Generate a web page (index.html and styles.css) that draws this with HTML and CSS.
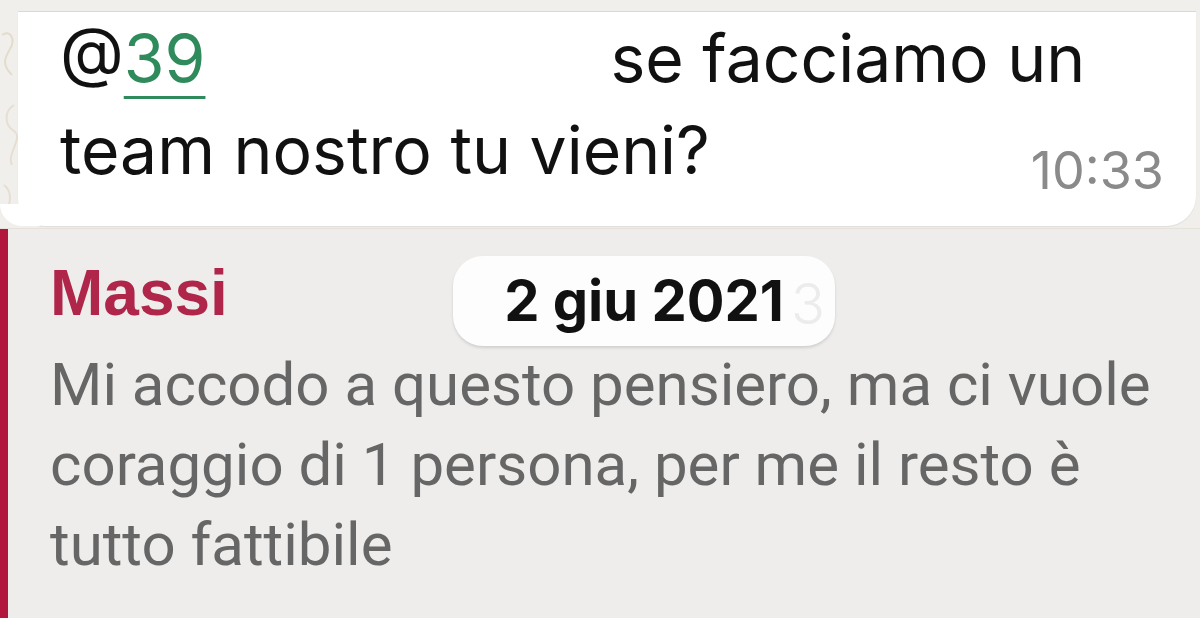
FILE: index.html
```html
<!DOCTYPE html>
<html lang="it">
  <head>
    <meta charset="UTF-8" />
    <meta name="viewport" content="width=device-width, initial-scale=1.0" />
    <title>Chat</title>
    <link rel="stylesheet" href="styles.css">
  </head>
  <body>
    <div class="chat">
      <svg class="doodles" width="18" height="210" viewBox="0 0 18 210">
        <path d="M2 20 C 10 14, 16 24, 10 34 S 2 50, 12 60" fill="none" stroke="#e3dccd" stroke-width="2"/>
        <path d="M14 90 C 4 96, 4 110, 14 116 S 6 140, 12 150" fill="none" stroke="#e6dfd1" stroke-width="2"/>
        <path d="M4 170 C 12 176, 12 190, 4 196" fill="none" stroke="#e6dfd1" stroke-width="2"/>
      </svg>
      <div class="bubble">
        <div class="line">
          <span>@<a class="mention">39</a></span>
          <span class="hidden-name"></span>
          <span>se facciamo un</span>
        </div>
        <div class="line last">
          <span>team nostro tu vieni?</span>
          <span class="time">10:33</span>
        </div>
      </div>
    </div>

    <div class="quote">
      <div class="author">Massi</div>
      <div class="quote-text">
        Mi accodo a questo pensiero, ma ci vuole
        coraggio di 1 persona, per me il resto è
        tutto fattibile
      </div>
      <div class="date-pill">2 giu 2021<span class="ghost">3</span></div>
    </div>
  </body>
</html>
```

FILE: styles.css
```css
body {
  margin: 0;
  padding: 0;
  width: 1200px;
  height: 618px;
  overflow: hidden;
  display: flex;
  flex-direction: column;
  background-color: #eeedeb;
}
.chat {
  display: flex;
  padding: 11px 4px 2px 0;
  background-color: #f0efec;
  border-bottom: 1px solid #e6e2da;
}
.doodles {
  flex: 0 0 18px;
  margin-top: 4px;
}
.bubble {
  position: relative;
  flex: 1;
  background-color: #fff;
  border-top: 1px solid #d9d9d9;
  border-radius: 0 0 30px 26px;
  padding: 0 0 30px 42px;
  font-family: "Inter", "Liberation Sans", sans-serif;
  font-size: 66px;
  line-height: 92px;
  color: #111;
  box-shadow: 0 1px 1px rgba(0, 0, 0, 0.08);
}
.bubble::before {
  content: "";
  position: absolute;
  left: -18px;
  bottom: 0;
  width: 40px;
  height: 22px;
  background-color: #fff;
  border-radius: 0 0 0 22px;
}
.line {
  display: flex;
  white-space: nowrap;
}
.line.last {
  align-items: flex-end;
  justify-content: space-between;
  padding-right: 32px;
}
.mention {
  color: #2f8a5c;
  text-decoration: underline;
  text-decoration-thickness: 3px;
  text-underline-offset: 14px;
}
.hidden-name {
  width: 405px;
}
.time {
  font-size: 52px;
  line-height: 50px;
  color: #8a8a8a;
}
.quote {
  position: relative;
  flex: 1;
  border-left: 8px solid #b3163c;
  padding: 24px 0 0 42px;
  background-color: #eeedeb;
}
.author {
  font-family: "Liberation Sans", Arial, sans-serif;
  font-weight: bold;
  font-size: 64px;
  line-height: 80px;
  color: #b0264a;
}
.quote-text {
  margin-top: 12px;
  width: 1140px;
  font-family: "Roboto", "Liberation Sans", sans-serif;
  font-size: 60px;
  line-height: 80px;
  color: #666;
}
.date-pill {
  position: absolute;
  left: 445px;
  top: 27px;
  width: 382px;
  height: 90px;
  display: flex;
  align-items: center;
  justify-content: center;
  background-color: #fdfdfd;
  border-radius: 30px;
  box-shadow: 0 2px 3px rgba(0, 0, 0, 0.12);
  font-family: "Inter", "Liberation Sans", sans-serif;
  font-weight: 700;
  font-size: 56px;
  color: #111;
}
.ghost {
  position: absolute;
  right: 10px;
  top: 14px;
  font-weight: 300;
  color: #ececec;
}
```
